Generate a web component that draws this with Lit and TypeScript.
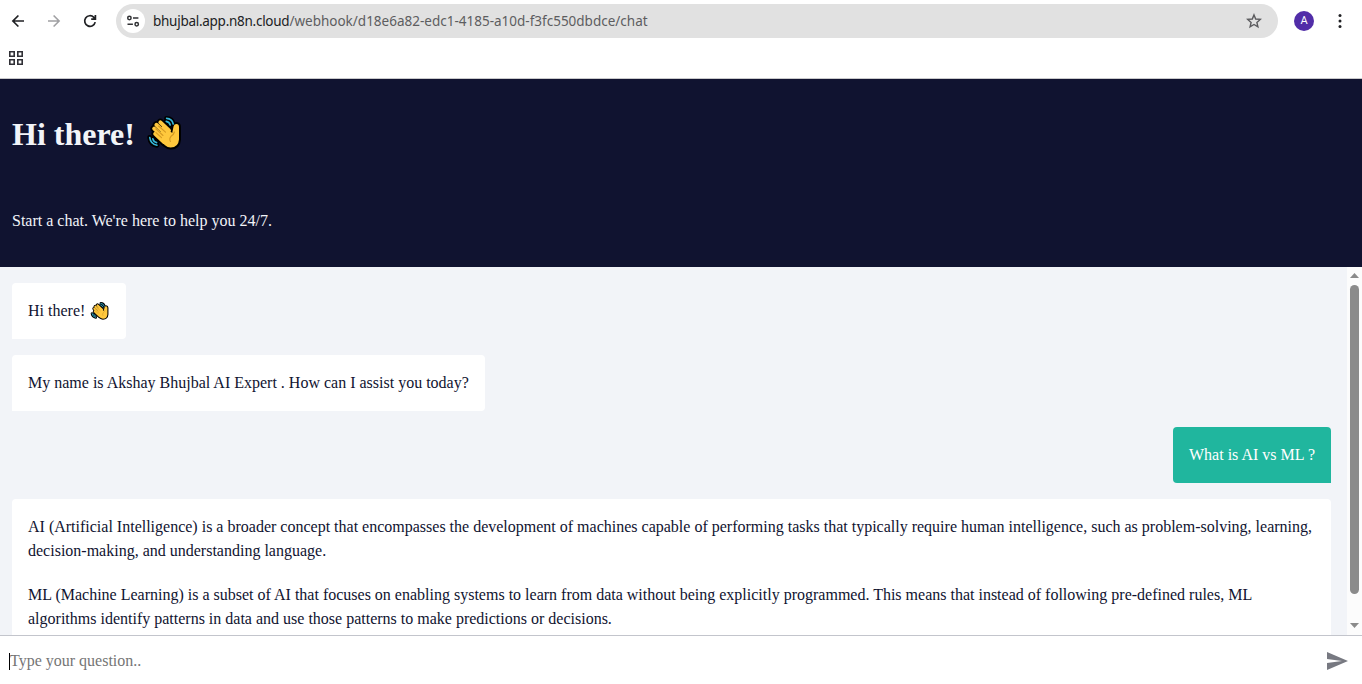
import { LitElement, html, css, svg } from 'lit';
import { customElement, property } from 'lit/decorators.js';

@customElement('wave-hand')
class WaveHand extends LitElement {
  static styles = css`
    :host { display: block; }
    svg { display: block; width: 100%; height: 100%; overflow: visible; }
  `;
  render() {
    const fingers = 'M12.4 8.4 21 16.5M8.4 10.8 18 20M6.2 14.6 16 24M7.2 19.8 16 28';
    const palm = 'M14 10.5 24.2 19 25.6 12.2Q26.2 10 28.4 10 31 10.2 31 13V25.5Q30.4 33.4 22.6 33.4 19.6 33.4 17 31.2L7.5 22 14 17Z';
    const arcs = svg`<path d="M18.6 4.4Q24 4.6 25.2 10M18.2 7.4Q21.4 7.8 22.2 11M1.8 23.6Q2.6 30.2 9 31.2M4.8 24.8Q5.6 28 8.6 28.6"/>`;
    return html`<svg viewBox="0 0 34 36" fill="none" stroke-linecap="round" stroke-linejoin="round">
      <g stroke="#000" stroke-width="5">${arcs}</g>
      <path d=${fingers} stroke="#000" stroke-width="7.4"/>
      <path d=${palm} fill="#000" stroke="#000" stroke-width="4"/>
      <g stroke="#35b8da" stroke-width="1.6">${arcs}</g>
      <path d=${fingers} stroke="#ffc83d" stroke-width="4"/>
      <path d=${palm} fill="#ffc83d"/>
      <path d="M10.6 12 17.5 18.2M7.8 14.8 15 21.5M8 18.6 13.5 23.6M26.4 18Q25.8 20.5 23.3 22 20.8 24.5 22.4 27.5" stroke="#d69a22" stroke-width="1.1"/>
    </svg>`;
  }
}

@customElement('browser-bar')
class BrowserBar extends LitElement {
  static styles = css`
    :host { display: block; height: 78px; background: #fff; border-bottom: 1px solid #c9c9cb; }
    .nav { display: flex; align-items: center; height: 42px; }
    svg { display: block; flex: none; }
    .back { margin-left: 10px; }
    .fwd { margin-left: 20px; }
    .reload { margin-left: 20px; }
    .pill { margin-left: 18px; width: 1162px; height: 34px; border-radius: 17px; background: #e1e1e1; display: flex; align-items: center; flex: none; }
    .site { width: 24px; height: 24px; border-radius: 50%; background: #fff; margin-left: 5px; display: flex; align-items: center; justify-content: center; }
    .url { margin-left: 8px; font: 13.5px/20px "Noto Sans", sans-serif; color: #5d5d60; white-space: pre; flex: 1; }
    .host { color: #202124; letter-spacing: -0.27px; }
    .star { margin-right: 16px; }
    .avatar { width: 20px; height: 20px; border-radius: 50%; background: #512da8; color: #fff; font: 11px/20px Roboto, sans-serif; text-align: center; margin-left: 16px; }
    .menu { margin-left: 18px; }
    .bookmarks { padding: 9px 0 0 8px; }
  `;
  render() {
    return html`
      <div class="nav">
        <svg class="back" width="16" height="16" viewBox="0 0 16 16" fill="none" stroke="#202124" stroke-width="1.7"><path d="M14 8H3M8.4 2.5 2.9 8l5.5 5.5"/></svg>
        <svg class="fwd" width="16" height="16" viewBox="0 0 16 16" fill="none" stroke="#a0a0a3" stroke-width="1.6"><path d="M2 8h11M7.6 2.5 13.1 8l-5.5 5.5"/></svg>
        <svg class="reload" width="16" height="16" viewBox="0 0 16 16" fill="none" stroke="#202124" stroke-width="1.7"><path d="M13.2 9.1A5.3 5.3 0 1 1 11.8 4.3L13.2 5.8M13.4 2V6.2H9.2"/></svg>
        <div class="pill">
          <div class="site"><svg width="14" height="14" viewBox="0 0 14 14" fill="none" stroke="#303134" stroke-width="1.5"><circle cx="3.4" cy="4" r="1.7"/><path d="M7 4h5.4M1.5 10.3h5.4"/><circle cx="10.7" cy="10.3" r="1.7"/></svg></div>
          <div class="url"><span class="host">bhujbal.app.n8n.cloud</span>/webhook/d18e6a82-edc1-4185-a10d-f3fc550dbdce/chat</div>
          <svg class="star" width="16" height="16" viewBox="0 0 16 16" fill="none" stroke="#5a5a5d" stroke-width="1.4"><path d="M8 1.9 9.7 6l4.6.4-3.4 3 1 4.4L8 11.5l-3.9 2.3 1-4.4-3.4-3L6.3 6Z"/></svg>
        </div>
        <div class="avatar">A</div>
        <svg class="menu" width="16" height="16" viewBox="0 0 16 16" fill="#202124"><circle cx="8" cy="2.6" r="1.5"/><circle cx="8" cy="8" r="1.5"/><circle cx="8" cy="13.4" r="1.5"/></svg>
      </div>
      <div class="bookmarks">
        <svg width="16" height="16" viewBox="0 0 16 16" fill="none" stroke="#303036" stroke-width="1.6"><path d="M1.8.8h4.4v4.4H1.8zM9.8.8h4.4v4.4H9.8zM1.8 8.8h4.4v4.4H1.8zM9.8 8.8h4.4v4.4H9.8z"/></svg>
      </div>`;
  }
}

@customElement('chat-message')
class ChatMessage extends LitElement {
  @property({ reflect: true }) from = 'bot';
  static styles = css`
    :host { display: block; box-sizing: border-box; padding: 16px; border-radius: 4px 4px 4px 0; background: #fff; color: #101330; align-self: flex-start; flex: none; white-space: nowrap; }
    :host([from='user']) { align-self: flex-end; background: #20b69e; color: #fff; border-radius: 4px 4px 0 4px; }
  `;
  render() { return html`<slot></slot>`; }
}

@customElement('app-root')
class AppRoot extends LitElement {
  static styles = css`
    :host { display: flex; flex-direction: column; height: 684px; overflow: hidden; background: #fff; font: 16px/24px "Liberation Serif", serif; }
    .header { height: 188px; flex: none; box-sizing: border-box; background: #101330; color: #f2f4f8; padding: 35px 12px 0; }
    .title { display: flex; margin: 0; height: 40px; font-size: 32px; line-height: 40px; white-space: nowrap; }
    .big { width: 34px; height: 36px; margin-left: 13px; }
    .sub { margin: 55px 0 0; }
    .body { flex: 1; min-height: 0; display: flex; background: #f2f4f8; }
    .list { flex: 1; min-height: 0; overflow: hidden; box-sizing: border-box; padding: 16px 16px 0 12px; display: flex; flex-direction: column; gap: 16px; }
    .hello { width: 114px; }
    .greet { display: flex; }
    .small { width: 18px; height: 19px; margin: 2px 0 0 6px; }
    .intro { width: 473px; }
    .ask { width: 158px; }
    .answer { width: 1319px; }
    p { margin: 0 0 20px; }
    .line { display: block; }
    .scroll { width: 15px; background: #fcfcfc; display: flex; flex-direction: column; align-items: center; box-sizing: border-box; padding: 6px 0 7px; }
    .scroll svg { display: block; flex: none; }
    .thumb { width: 9px; height: 309px; border-radius: 5px; background: #8b8b8b; margin-top: 7px; }
    .down { margin-top: auto; }
    .footer { height: 49px; flex: none; box-sizing: border-box; border-top: 1px solid #c3c5cc; display: flex; align-items: center; padding: 2px 14px 0 9px; color: #757575; }
    .caret { width: 1px; height: 17px; background: #000; }
    .hint { flex: 1; }
  `;
  render() {
    return html`
      <browser-bar></browser-bar>
      <div class="header">
        <h1 class="title"><span>Hi there!</span><wave-hand class="big"></wave-hand></h1>
        <p class="sub">Start a chat. We're here to help you 24/7.</p>
      </div>
      <div class="body">
        <div class="list">
          <chat-message class="hello"><div class="greet"><span>Hi there!</span><wave-hand class="small"></wave-hand></div></chat-message>
          <chat-message class="intro">My name is Akshay Bhujbal AI Expert . How can I assist you today?</chat-message>
          <chat-message class="ask" from="user">What is AI vs ML ?</chat-message>
          <chat-message class="answer">
            <p><span class="line">AI (Artificial Intelligence) is a broader concept that encompasses the development of machines capable of performing tasks that typically require human intelligence, such as problem-solving, learning,</span><span class="line">decision-making, and understanding language.</span></p>
            <p><span class="line">ML (Machine Learning) is a subset of AI that focuses on enabling systems to learn from data without being explicitly programmed. This means that instead of following pre-defined rules, ML</span><span class="line">algorithms identify patterns in data and use those patterns to make predictions or decisions.</span></p>
          </chat-message>
        </div>
        <div class="scroll">
          <svg width="9" height="5" viewBox="0 0 9 5" fill="#8b8b8b"><path d="M0 5 4.5 0 9 5z"/></svg>
          <div class="thumb"></div>
          <svg class="down" width="9" height="5" viewBox="0 0 9 5" fill="#8b8b8b"><path d="M0 0 4.5 5 9 0z"/></svg>
        </div>
      </div>
      <div class="footer">
        <div class="caret"></div><span class="hint">Type your question..</span>
        <svg width="21" height="18" viewBox="0 0 21 18" fill="#777981"><path d="M0 18 21 9 0 0v7l15 2-15 2z"/></svg>
      </div>`;
  }
}
